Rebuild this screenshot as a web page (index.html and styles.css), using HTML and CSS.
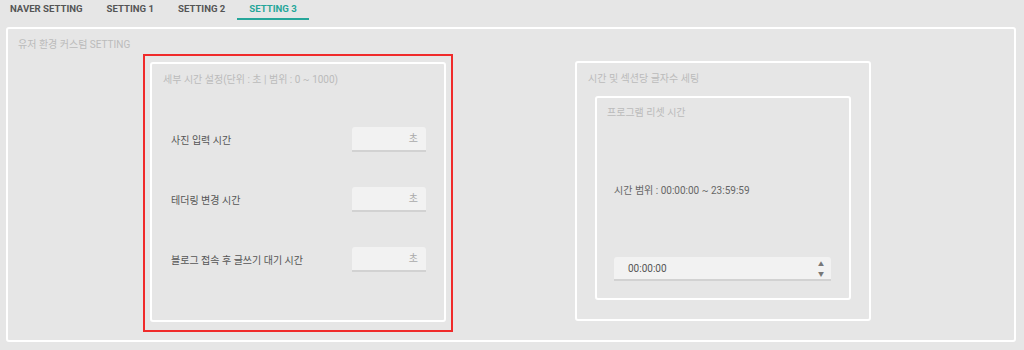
FILE: index.html
```html
<!DOCTYPE html>
<html lang="ko">
<head>
    <meta charset="UTF-8">
    <meta name="viewport" content="width=device-width, initial-scale=1.0">
    <title>Setting</title>
    <link rel="stylesheet" href="styles.css">
</head>
<body>
    <div class="tabs">
        <div class="tab">NAVER SETTING</div>
        <div class="tab">SETTING 1</div>
        <div class="tab">SETTING 2</div>
        <div class="tab active">SETTING 3</div>
    </div>

    <div class="panel">
        <div class="panel-title">유저 환경 커스텀 SETTING</div>
        <div class="panel-body">
            <div class="highlight">
                <div class="card card-left">
                    <div class="card-title">세부 시간 설정(단위 : 초 | 범위 : 0 ~ 1000)</div>
                    <div class="rows">
                        <div class="row">
                            <span class="row-label">사진 입력 시간</span>
                            <div class="sec-input">초</div>
                        </div>
                        <div class="row">
                            <span class="row-label">테더링 변경 시간</span>
                            <div class="sec-input">초</div>
                        </div>
                        <div class="row">
                            <span class="row-label">블로그 접속 후 글쓰기 대기 시간</span>
                            <div class="sec-input">초</div>
                        </div>
                    </div>
                </div>
            </div>

            <div class="card card-right">
                <div class="card-title">시간 및 섹션당 글자수 세팅</div>
                <div class="card inner-card">
                    <div class="card-title">프로그램 리셋 시간</div>
                    <div class="range-text">시간 범위 : 00:00:00 ~ 23:59:59</div>
                    <div class="time-input">
                        <span class="time-value">00:00:00</span>
                        <span class="spinner">
                            <span>&#9650;</span>
                            <span>&#9660;</span>
                        </span>
                    </div>
                </div>
            </div>
        </div>
    </div>
</body>
</html>
```

FILE: styles.css
```css
body {
    margin: 0;
    padding: 0;
    background-color: #e6e6e6;
    font-family: Roboto, "Noto Sans CJK KR", sans-serif;
    font-size: 10px;
    color: #555;
}

.tabs {
    display: flex;
    height: 27px;
    margin-left: -2px;
}

.tab {
    padding: 0 12px;
    height: 18px;
    line-height: 17px;
    font-weight: bold;
    font-size: 9.6px;
    color: #555;
    border-bottom: 2px solid transparent;
}

.tab.active {
    color: #26a69a;
    border-bottom-color: #26a69a;
}

.panel {
    margin-left: 6px;
    width: 1006px;
    height: 311px;
    border: 2px solid #fff;
    border-radius: 3px;
}

.panel-title {
    padding: 8px 0 0 10px;
    line-height: 15px;
    color: #bbb;
}

.panel-body {
    display: flex;
    align-items: flex-start;
    padding-left: 135px;
    margin-top: 2px;
}

.highlight {
    border: 2px solid #f02b2b;
    padding: 6px 5px 8px 5px;
}

.card {
    border: 2px solid #fff;
    border-radius: 3px;
    box-sizing: border-box;
}

.card-title {
    line-height: 15px;
    color: #bbb;
}

.card-left {
    width: 296px;
    height: 260px;
    padding: 8px 0 0 11px;
}

.rows {
    display: flex;
    flex-direction: column;
    gap: 35px;
    margin-top: 40px;
    padding: 0 18px 0 8px;
}

.row {
    display: flex;
    align-items: center;
    justify-content: space-between;
}

.row-label {
    color: #555;
}

.sec-input {
    width: 74px;
    height: 23px;
    box-sizing: content-box;
    background-color: #f2f2f2;
    border-bottom: 2px solid #d2d2d2;
    border-radius: 3px 3px 0 0;
    text-align: right;
    line-height: 23px;
    color: #aaa;
}

.sec-input::after {
    content: "";
    display: inline-block;
    width: 8px;
}

.card-right {
    width: 296px;
    height: 260px;
    margin: 7px 0 0 122px;
    padding: 8px 0 0 11px;
}

.inner-card {
    width: 256px;
    height: 204px;
    margin: 10px 0 0 7px;
    padding: 7px 0 0 10px;
}

.range-text {
    margin-top: 63px;
    padding-left: 7px;
    line-height: 15px;
    color: #666;
}

.time-input {
    display: flex;
    align-items: center;
    justify-content: space-between;
    width: 217px;
    height: 24px;
    box-sizing: border-box;
    margin: 59px 0 0 7px;
    padding: 0 7px 0 14px;
    background-color: #f2f2f2;
    border-bottom: 2px solid #d2d2d2;
    border-radius: 3px 3px 0 0;
    color: #555;
}

.spinner {
    display: flex;
    flex-direction: column;
    gap: 3px;
    font-size: 6px;
    line-height: 7px;
    color: #777;
}
```
